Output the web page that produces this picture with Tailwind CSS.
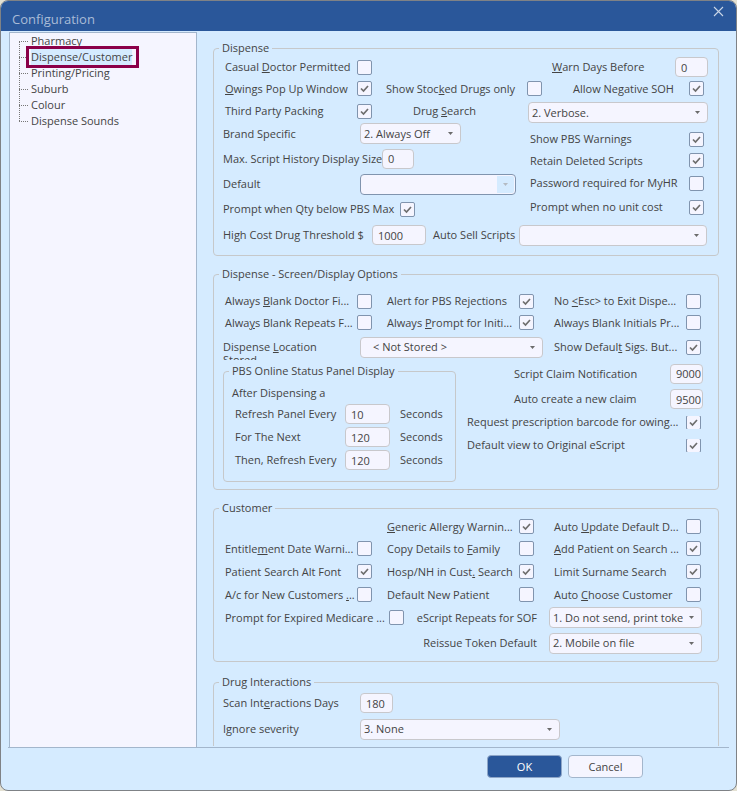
<!DOCTYPE html>
<html lang="en">
<head>
  <meta charset="UTF-8" />
  <meta name="viewport" content="width=device-width, initial-scale=1" />
  <title>Configuration</title>
  <script src="https://cdn.jsdelivr.net/npm/@tailwindcss/browser@4"></script>
</head>
<body class="h-screen bg-[#e4e1d3] font-['Open_Sans','Noto_Sans',sans-serif] text-[11px] leading-4 text-[#444444]">

  <!-- Shared icons -->
  <svg class="hidden">
    <symbol id="tick" viewBox="0 0 15 15"><path d="M4 7.5 L6.5 10 L11 5" fill="none" stroke="#6e6e6e" stroke-width="1.7" /></symbol>
    <symbol id="arrow" viewBox="0 0 5 3"><path d="M0 0 H5 L2.5 3 Z" fill="currentColor" /></symbol>
  </svg>

  <div class="flex h-full flex-col overflow-hidden rounded-lg border border-[#7f8286] bg-[#d5ebff]">

    <!-- Title bar -->
    <header class="flex h-[30px] shrink-0 items-start justify-between bg-[#2a579a] pl-[11px] pr-3 text-[#a9bbd7]">
      <h1 class="pt-2 text-[13px] leading-5">Configuration</h1>
      <button type="button" aria-label="Close" class="pt-[5px]">
        <svg class="size-[11px]" viewBox="0 0 11 11"><path d="M1 1 L10 10 M10 1 L1 10" stroke="#c9d5e7" stroke-width="1.1" /></svg>
      </button>
    </header>

    <div class="mx-[7px] flex min-h-0 flex-1 border-b border-[#a3b6cc]">

      <!-- Section tree -->
      <nav class="ml-px mt-px w-[188px] shrink-0 border border-b-0 border-[#a3b6cc] bg-[#f5f5ff] pl-[9px]">
        <ul class="relative">
          <li class="absolute left-0 top-2 h-20 border-l border-dotted border-[#777777]" aria-hidden="true"></li>
          <li class="flex h-4 items-center gap-[3px]"><span class="w-[9px] border-t border-dotted border-[#777777]"></span><a href="#">Pharmacy</a></li>
          <li class="relative flex h-4 items-center gap-[3px]">
            <span class="w-[9px] border-t border-dotted border-[#777777]"></span><a href="#" class="bg-[#d5ebff]">Dispense/Customer</a>
            <span class="pointer-events-none absolute -top-[3px] left-[7px] h-[22px] w-[113px] border-[3px] border-[#8b0049]"></span>
          </li>
          <li class="flex h-4 items-center gap-[3px]"><span class="w-[9px] border-t border-dotted border-[#777777]"></span><a href="#">Printing/Pricing</a></li>
          <li class="flex h-4 items-center gap-[3px]"><span class="w-[9px] border-t border-dotted border-[#777777]"></span><a href="#">Suburb</a></li>
          <li class="flex h-4 items-center gap-[3px]"><span class="w-[9px] border-t border-dotted border-[#777777]"></span><a href="#">Colour</a></li>
          <li class="flex h-4 items-center gap-[3px]"><span class="w-[9px] border-t border-dotted border-[#777777]"></span><a href="#">Dispense Sounds</a></li>
        </ul>
      </nav>

      <!-- Settings -->
      <form class="mb-px flex min-w-0 flex-1 flex-col gap-[10px] overflow-hidden whitespace-nowrap pl-4 pr-[10px] pt-[9px]">

        <!-- Dispense -->
        <fieldset class="shrink-0 rounded border border-[#c6c8ca] pb-2">
          <legend class="ml-[5px] px-[3px]">Dispense</legend>

          <div class="flex h-[22px] items-center pl-[11px] pr-[10px]">
            <label class="flex items-center"><span class="w-[132px]">Casual <u>D</u>octor Permitted</span><input type="checkbox" class="peer size-[15px] appearance-none rounded-xs border border-[#8094ae] bg-[#f5f5ff]" /><svg class="invisible -ml-[15px] size-[15px] peer-checked:visible"><use href="#tick" /></svg></label>
            <label for="warnDays" class="ml-auto w-[123px]"><u>W</u>arn Days Before</label>
            <input id="warnDays" type="text" value="0" class="h-5 w-[33px] rounded border border-[#c8c8cc] bg-[#f5f5ff] pl-[5px]" />
          </div>

          <div class="flex h-[21px] items-center pl-[11px] pr-[14px]">
            <label class="flex items-center"><span class="w-[132px]"><u>O</u>wings Pop Up Window</span><input type="checkbox" checked class="peer size-[15px] appearance-none rounded-xs border border-[#8094ae] bg-[#f5f5ff]" /><svg class="invisible -ml-[15px] size-[15px] peer-checked:visible"><use href="#tick" /></svg></label>
            <label class="ml-[14px] flex items-center"><span class="w-[141px]">Show Stoc<u>k</u>ed Drugs only</span><input type="checkbox" class="peer size-[15px] appearance-none rounded-xs border border-[#8094ae] bg-[#f5f5ff]" /><svg class="invisible -ml-[15px] size-[15px] peer-checked:visible"><use href="#tick" /></svg></label>
            <label class="ml-auto flex items-center"><span class="w-[116px]">Allow Negative SOH</span><input type="checkbox" checked class="peer size-[15px] appearance-none rounded-xs border border-[#8094ae] bg-[#f5f5ff]" /><svg class="invisible -ml-[15px] size-[15px] peer-checked:visible"><use href="#tick" /></svg></label>
          </div>

          <div class="flex h-6 items-center pl-[11px] pr-[10px]">
            <label class="flex items-center"><span class="w-[132px]">Third Party Packing</span><input type="checkbox" checked class="peer size-[15px] appearance-none rounded-xs border border-[#8094ae] bg-[#f5f5ff]" /><svg class="invisible -ml-[15px] size-[15px] peer-checked:visible"><use href="#tick" /></svg></label>
            <label for="drugSearch" class="ml-[41px] w-[115px]">Drug <u>S</u>earch</label>
            <span class="relative h-[21px] flex-1 self-end">
              <select id="drugSearch" class="size-full appearance-none rounded border border-[#c8c8cc] bg-[#f5f5ff] pl-[3px] pr-5 text-[11px]"><option>2. Verbose.</option></select>
              <svg class="pointer-events-none absolute right-2 top-[9px] h-[3px] w-[5px] text-[#6b6b6b]"><use href="#arrow" /></svg>
            </span>
          </div>

          <div class="flex">
            <div class="w-[316px] pl-[9px]">
              <div class="flex h-[21px] items-center">
                <label for="brandSpecific" class="w-[137px]">Brand Specific</label>
                <span class="relative h-[21px] w-[101px]">
                  <select id="brandSpecific" class="size-full appearance-none rounded border border-[#c8c8cc] bg-[#f5f5ff] pl-[3px] pr-5 text-[11px]"><option>2. Always Off</option></select>
                  <svg class="pointer-events-none absolute right-2 top-[9px] h-[3px] w-[5px] text-[#6b6b6b]"><use href="#arrow" /></svg>
                </span>
              </div>
              <div class="flex h-[29px] items-center">
                <label for="historySize" class="w-[159px]">Max. Script History Display Size</label>
                <input id="historySize" type="text" value="0" class="h-5 w-8 rounded border border-[#c8c8cc] bg-[#f5f5ff] pl-[5px]" />
              </div>
              <div class="flex h-[22px] items-center">
                <label for="defaultOption" class="w-[137px]">Default</label>
                <span class="relative h-[21px] w-[156px]">
                  <select id="defaultOption" class="size-full appearance-none rounded border border-[#8094ae] bg-[#f5f5ff] pl-[3px] pr-5 text-[11px]"><option></option></select>
                  <span class="pointer-events-none absolute bottom-[2px] right-[2px] top-[2px] flex w-[17px] items-center justify-center rounded-r-xs bg-[#d5ebff] text-[#b4bac2]"><svg class="h-[3px] w-[5px]"><use href="#arrow" /></svg></span>
                </span>
              </div>
              <label class="flex h-7 items-center"><span class="w-[177px]">Prompt when Qty below PBS Max</span><input type="checkbox" checked class="peer size-[15px] appearance-none rounded-xs border border-[#8094ae] bg-[#f5f5ff]" /><svg class="invisible -ml-[15px] size-[15px] peer-checked:visible"><use href="#tick" /></svg></label>
            </div>
            <div class="flex-1 pr-[14px] pt-[5px]">
              <label class="flex h-[22px] items-center"><span class="w-0 flex-1">Show PBS Warnings</span><input type="checkbox" checked class="peer size-[15px] appearance-none rounded-xs border border-[#8094ae] bg-[#f5f5ff]" /><svg class="invisible -ml-[15px] size-[15px] peer-checked:visible"><use href="#tick" /></svg></label>
              <label class="flex h-[21px] items-center"><span class="w-0 flex-1">Retain Deleted Scripts</span><input type="checkbox" checked class="peer size-[15px] appearance-none rounded-xs border border-[#8094ae] bg-[#f5f5ff]" /><svg class="invisible -ml-[15px] size-[15px] peer-checked:visible"><use href="#tick" /></svg></label>
              <label class="flex h-6 items-center"><span class="w-0 flex-1">Password required for MyHR</span><input type="checkbox" class="peer size-[15px] appearance-none rounded-xs border border-[#8094ae] bg-[#f5f5ff]" /><svg class="invisible -ml-[15px] size-[15px] peer-checked:visible"><use href="#tick" /></svg></label>
              <label class="flex h-6 items-center"><span class="w-0 flex-1">Prompt when no unit cost</span><input type="checkbox" checked class="peer size-[15px] appearance-none rounded-xs border border-[#8094ae] bg-[#f5f5ff]" /><svg class="invisible -ml-[15px] size-[15px] peer-checked:visible"><use href="#tick" /></svg></label>
            </div>
          </div>

          <div class="flex h-6 items-center pl-[9px] pr-[11px]">
            <label for="highCost" class="w-[149px]">High Cost Drug Threshold $</label>
            <input id="highCost" type="text" value="1000" class="h-5 w-[54px] rounded border border-[#c8c8cc] bg-[#f5f5ff] pl-[5px]" />
            <label for="autoSell" class="ml-[7px] w-[86px]">Auto Sell Scripts</label>
            <span class="relative h-[21px] flex-1">
              <select id="autoSell" class="size-full appearance-none rounded border border-[#c8c8cc] bg-[#f5f5ff] pl-[3px] pr-5 text-[11px]"><option></option></select>
              <svg class="pointer-events-none absolute right-2 top-[9px] h-[3px] w-[5px] text-[#6b6b6b]"><use href="#arrow" /></svg>
            </span>
          </div>
        </fieldset>

        <!-- Dispense - Screen/Display Options -->
        <fieldset class="shrink-0 rounded border border-[#c6c8ca] pb-[7px]">
          <legend class="ml-[5px] px-[3px]">Dispense - Screen/Display Options</legend>

          <div class="grid h-[51px] grid-cols-[147px_147px_1fr] grid-rows-[22px_21px] gap-x-[15px] pl-[11px] pr-[17px] pt-2">
            <label class="flex items-center"><span class="w-[132px]">Always <u>B</u>lank Doctor Fi...</span><input type="checkbox" class="peer size-[15px] appearance-none rounded-xs border border-[#8094ae] bg-[#f5f5ff]" /><svg class="invisible -ml-[15px] size-[15px] peer-checked:visible"><use href="#tick" /></svg></label>
            <label class="flex items-center"><span class="w-[132px]">Alert for PBS Rejections</span><input type="checkbox" checked class="peer size-[15px] appearance-none rounded-xs border border-[#8094ae] bg-[#f5f5ff]" /><svg class="invisible -ml-[15px] size-[15px] peer-checked:visible"><use href="#tick" /></svg></label>
            <label class="flex items-center pl-[5px]"><span class="w-0 flex-1">No <u>&lt;</u>Esc&gt; to Exit Dispe...</span><input type="checkbox" class="peer size-[15px] appearance-none rounded-xs border border-[#8094ae] bg-[#f5f5ff]" /><svg class="invisible -ml-[15px] size-[15px] peer-checked:visible"><use href="#tick" /></svg></label>
            <label class="flex items-center"><span class="w-[132px]">Alwa<u>y</u>s Blank Repeats F...</span><input type="checkbox" class="peer size-[15px] appearance-none rounded-xs border border-[#8094ae] bg-[#f5f5ff]" /><svg class="invisible -ml-[15px] size-[15px] peer-checked:visible"><use href="#tick" /></svg></label>
            <label class="flex items-center"><span class="w-[132px]">Always <u>P</u>rompt for Initi...</span><input type="checkbox" checked class="peer size-[15px] appearance-none rounded-xs border border-[#8094ae] bg-[#f5f5ff]" /><svg class="invisible -ml-[15px] size-[15px] peer-checked:visible"><use href="#tick" /></svg></label>
            <label class="flex items-center pl-[5px]"><span class="w-0 flex-1">Always Blank Initials Pr...</span><input type="checkbox" class="peer size-[15px] appearance-none rounded-xs border border-[#8094ae] bg-[#f5f5ff]" /><svg class="invisible -ml-[15px] size-[15px] peer-checked:visible"><use href="#tick" /></svg></label>
          </div>

          <div class="flex h-7 items-center pl-[9px] pr-[17px]">
            <label for="location" class="mb-px h-5 w-[137px] self-end overflow-hidden leading-[13px]">Dispense <u>L</u>ocation<br />Stored</label>
            <span class="relative h-[21px] w-[183px]">
              <select id="location" class="size-full appearance-none rounded border border-[#c8c8cc] bg-[#f5f5ff] pl-3 pr-5 text-[11px]"><option>&lt; Not Stored &gt;</option></select>
              <svg class="pointer-events-none absolute right-2 top-[9px] h-[3px] w-[5px] text-[#6b6b6b]"><use href="#arrow" /></svg>
            </span>
            <label class="ml-[11px] flex flex-1 items-center"><span class="w-0 flex-1">Show Defaul<u>t</u> Sigs. But...</span><input type="checkbox" checked class="peer size-[15px] appearance-none rounded-xs border border-[#8094ae] bg-[#f5f5ff]" /><svg class="invisible -ml-[15px] size-[15px] peer-checked:visible"><use href="#tick" /></svg></label>
          </div>

          <div class="flex pl-[9px]">
            <fieldset class="mt-[2px] w-[233px] rounded border border-[#c6c8ca] pb-[10px]">
              <legend class="ml-[5px] px-[3px]">PBS Online Status Panel Display</legend>
              <p class="pl-2 pt-1 leading-5">After Dispensing a</p>
              <div class="flex h-[22px] items-center pl-[11px]">
                <label for="refreshPanel" class="w-[110px]">Refresh Panel Every</label>
                <input id="refreshPanel" type="text" value="10" class="h-5 w-[45px] rounded border border-[#c8c8cc] bg-[#f5f5ff] pl-[5px]" />
                <span class="ml-[10px]">Seconds</span>
              </div>
              <div class="flex h-6 items-center pl-[11px]">
                <label for="forNext" class="w-[110px]">For The Next</label>
                <input id="forNext" type="text" value="120" class="h-5 w-[45px] rounded border border-[#c8c8cc] bg-[#f5f5ff] pl-[5px]" />
                <span class="ml-[10px]">Seconds</span>
              </div>
              <div class="flex h-[22px] items-center pl-[11px]">
                <label for="thenRefresh" class="w-[110px]">Then, Refresh Every</label>
                <input id="thenRefresh" type="text" value="120" class="h-5 w-[45px] rounded border border-[#c8c8cc] bg-[#f5f5ff] pl-[5px]" />
                <span class="ml-[10px]">Seconds</span>
              </div>
            </fieldset>

            <div class="flex-1 pl-[11px]">
              <div class="flex h-[25px] items-center pr-[15px]">
                <label for="claimNotify" class="ml-auto w-[156px]">Script Claim Notification</label>
                <input id="claimNotify" type="text" value="9000" class="h-5 w-[33px] rounded border border-[#c8c8cc] bg-[#f5f5ff] pl-[5px]" />
              </div>
              <div class="flex h-[26px] items-center pr-[15px]">
                <label for="claimCreate" class="ml-auto w-[156px]">Auto create a new claim</label>
                <input id="claimCreate" type="text" value="9500" class="h-5 w-[33px] rounded border border-[#c8c8cc] bg-[#f5f5ff] pl-[5px]" />
              </div>
              <label class="flex h-5 items-center pr-[17px]"><span class="w-0 flex-1">Request prescription barcode for owing...</span><span class="flex h-[13px] items-center overflow-hidden"><input type="checkbox" checked class="peer size-[15px] shrink-0 appearance-none rounded-xs border border-[#8094ae] bg-[#f5f5ff]" /><svg class="invisible -ml-[15px] size-[15px] shrink-0 peer-checked:visible"><use href="#tick" /></svg></span></label>
              <label class="flex h-[26px] items-center pr-[17px]"><span class="w-0 flex-1">Default view to Original eScript</span><span class="flex h-[13px] items-center overflow-hidden"><input type="checkbox" checked class="peer size-[15px] shrink-0 appearance-none rounded-xs border border-[#8094ae] bg-[#f5f5ff]" /><svg class="invisible -ml-[15px] size-[15px] shrink-0 peer-checked:visible"><use href="#tick" /></svg></span></label>
            </div>
          </div>
        </fieldset>

        <!-- Customer -->
        <fieldset class="shrink-0 rounded border border-[#c6c8ca] pb-1">
          <legend class="ml-[5px] px-[3px]">Customer</legend>

          <div class="grid grid-cols-[147px_147px_1fr] grid-rows-[21px_23px_23px_23px] gap-x-[15px] pl-[11px] pr-[17px]">
            <label class="col-start-2 flex items-center"><span class="w-[132px]"><u>G</u>eneric Allergy Warnin...</span><input type="checkbox" checked class="peer size-[15px] appearance-none rounded-xs border border-[#8094ae] bg-[#f5f5ff]" /><svg class="invisible -ml-[15px] size-[15px] peer-checked:visible"><use href="#tick" /></svg></label>
            <label class="flex items-center pl-[5px]"><span class="w-0 flex-1">Auto <u>U</u>pdate Default D...</span><input type="checkbox" class="peer size-[15px] appearance-none rounded-xs border border-[#8094ae] bg-[#f5f5ff]" /><svg class="invisible -ml-[15px] size-[15px] peer-checked:visible"><use href="#tick" /></svg></label>

            <label class="flex items-center"><span class="w-[132px]">Entitle<u>m</u>ent Date Warni...</span><input type="checkbox" class="peer size-[15px] appearance-none rounded-xs border border-[#8094ae] bg-[#f5f5ff]" /><svg class="invisible -ml-[15px] size-[15px] peer-checked:visible"><use href="#tick" /></svg></label>
            <label class="flex items-center"><span class="w-[132px]">Copy Details to <u>F</u>amily</span><input type="checkbox" class="peer size-[15px] appearance-none rounded-xs border border-[#8094ae] bg-[#f5f5ff]" /><svg class="invisible -ml-[15px] size-[15px] peer-checked:visible"><use href="#tick" /></svg></label>
            <label class="flex items-center pl-[5px]"><span class="w-0 flex-1"><u>A</u>dd Patient on Search ...</span><input type="checkbox" checked class="peer size-[15px] appearance-none rounded-xs border border-[#8094ae] bg-[#f5f5ff]" /><svg class="invisible -ml-[15px] size-[15px] peer-checked:visible"><use href="#tick" /></svg></label>

            <label class="flex items-center"><span class="w-[132px]">Patient Search Alt Font</span><input type="checkbox" checked class="peer size-[15px] appearance-none rounded-xs border border-[#8094ae] bg-[#f5f5ff]" /><svg class="invisible -ml-[15px] size-[15px] peer-checked:visible"><use href="#tick" /></svg></label>
            <label class="flex items-center"><span class="w-[132px]">Hosp/NH in Cust<u>.</u> Search</span><input type="checkbox" checked class="peer size-[15px] appearance-none rounded-xs border border-[#8094ae] bg-[#f5f5ff]" /><svg class="invisible -ml-[15px] size-[15px] peer-checked:visible"><use href="#tick" /></svg></label>
            <label class="flex items-center pl-[5px]"><span class="w-0 flex-1">Limit Surname Search</span><input type="checkbox" checked class="peer size-[15px] appearance-none rounded-xs border border-[#8094ae] bg-[#f5f5ff]" /><svg class="invisible -ml-[15px] size-[15px] peer-checked:visible"><use href="#tick" /></svg></label>

            <label class="flex items-center"><span class="w-[132px]">A/c for New Customers <u>.</u>..</span><input type="checkbox" class="peer size-[15px] appearance-none rounded-xs border border-[#8094ae] bg-[#f5f5ff]" /><svg class="invisible -ml-[15px] size-[15px] peer-checked:visible"><use href="#tick" /></svg></label>
            <label class="flex items-center"><span class="w-[132px]">Default New Patient</span><input type="checkbox" class="peer size-[15px] appearance-none rounded-xs border border-[#8094ae] bg-[#f5f5ff]" /><svg class="invisible -ml-[15px] size-[15px] peer-checked:visible"><use href="#tick" /></svg></label>
            <label class="flex items-center pl-[5px]"><span class="w-0 flex-1">Auto <u>C</u>hoose Customer</span><input type="checkbox" class="peer size-[15px] appearance-none rounded-xs border border-[#8094ae] bg-[#f5f5ff]" /><svg class="invisible -ml-[15px] size-[15px] peer-checked:visible"><use href="#tick" /></svg></label>
          </div>

          <div class="flex h-[23px] items-center pl-[11px] pr-4">
            <label class="flex items-center"><span class="w-[164px]">Prompt for Expired Medicare ...</span><input type="checkbox" class="peer size-[15px] appearance-none rounded-xs border border-[#8094ae] bg-[#f5f5ff]" /><svg class="invisible -ml-[15px] size-[15px] peer-checked:visible"><use href="#tick" /></svg></label>
            <label for="escriptRepeats" class="w-[133px] text-right">eScript Repeats for SOF</label>
            <span class="relative ml-3 h-[21px] flex-1">
              <select id="escriptRepeats" class="size-full appearance-none rounded border border-[#c8c8cc] bg-[#f5f5ff] pl-[3px] pr-[18px] text-[11px]"><option>1. Do not send, print token</option></select>
              <svg class="pointer-events-none absolute right-2 top-[9px] h-[3px] w-[5px] text-[#6b6b6b]"><use href="#arrow" /></svg>
            </span>
          </div>
          <div class="flex h-7 items-center pl-[11px] pr-4">
            <label for="reissueToken" class="w-[312px] text-right">Reissue Token Default</label>
            <span class="relative ml-3 h-[21px] flex-1">
              <select id="reissueToken" class="size-full appearance-none rounded border border-[#c8c8cc] bg-[#f5f5ff] pl-[3px] pr-[18px] text-[11px]"><option>2. Mobile on file</option></select>
              <svg class="pointer-events-none absolute right-2 top-[9px] h-[3px] w-[5px] text-[#6b6b6b]"><use href="#arrow" /></svg>
            </span>
          </div>
        </fieldset>

        <!-- Drug Interactions -->
        <fieldset class="mt-0.5 shrink-0 rounded border border-[#c6c8ca] pb-5">
          <legend class="ml-[5px] px-[3px]">Drug Interactions</legend>
          <div class="flex h-[26px] items-center pl-[9px]">
            <label for="scanDays" class="w-[137px]">Scan Int<u>e</u>ractions Days</label>
            <input id="scanDays" type="text" value="180" class="h-5 w-[33px] rounded border border-[#c8c8cc] bg-[#f5f5ff] pl-[5px]" />
          </div>
          <div class="flex h-[26px] items-center pl-[9px]">
            <label for="severity" class="w-[137px]">Ignore severity</label>
            <span class="relative h-[21px] w-[200px]">
              <select id="severity" class="size-full appearance-none rounded border border-[#c8c8cc] bg-[#f5f5ff] pl-[3px] pr-5 text-[11px]"><option>3. None</option></select>
              <svg class="pointer-events-none absolute right-2 top-[9px] h-[3px] w-[5px] text-[#6b6b6b]"><use href="#arrow" /></svg>
            </span>
          </div>
        </fieldset>
      </form>
    </div>

    <!-- Footer buttons -->
    <footer class="flex h-[42px] shrink-0 items-start justify-end gap-[6px] pr-[93px] pt-[7px]">
      <button type="button" class="h-[23px] w-[75px] rounded border border-[#8ea6c8] bg-[#2a579a] text-white">OK</button>
      <button type="button" class="h-[23px] w-[75px] rounded border border-[#a3b6cc] bg-[#f5f5ff]">Cancel</button>
    </footer>
  </div>

</body>
</html>
